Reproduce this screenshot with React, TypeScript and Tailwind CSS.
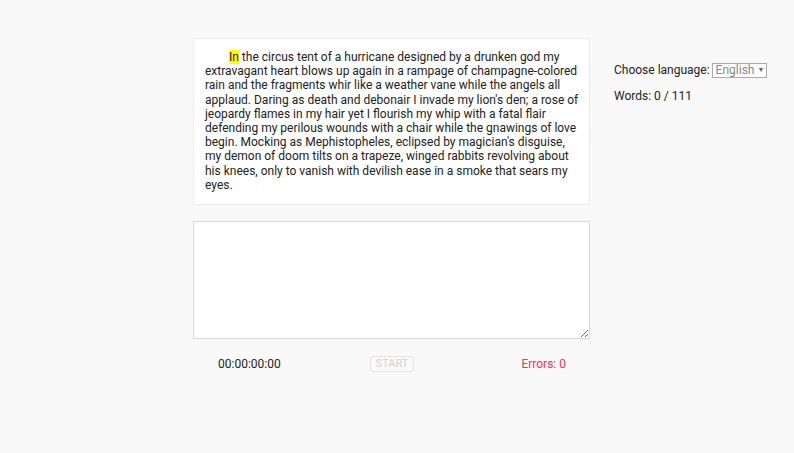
import { useState } from "react"

const passage =
  "In the circus tent of a hurricane designed by a drunken god my extravagant heart blows up again in a rampage of champagne-colored rain and the fragments whir like a weather vane while the angels all applaud. Daring as death and debonair I invade my lion's den; a rose of jeopardy flames in my hair yet I flourish my whip with a fatal flair defending my perilous wounds with a chair while the gnawings of love begin. Mocking as Mephistopheles, eclipsed by magician's disguise, my demon of doom tilts on a trapeze, winged rabbits revolving about his knees, only to vanish with devilish ease in a smoke that sears my eyes."

export default function App() {
  const [typed, setTyped] = useState("")
  const words = passage.split(" ")
  const rest = passage.slice(words[0].length)

  return (
    <div className="min-h-[453px] w-full bg-[#f9f9f9] font-['Roboto',sans-serif] text-[12px] text-[#222]">
      <div className="flex pl-[193px] pt-[38px]">
        <div className="w-[397px]">
          <div className="border border-[#ececec] bg-white pl-[11px] pr-[8px] pt-[11px] pb-[12px] leading-[14.2px] indent-[24px]">
            <span className="bg-[#ffff00]">{words[0]}</span>
            {rest}
          </div>

          <textarea
            value={typed}
            onChange={(e) => setTyped(e.target.value)}
            className="mt-[16px] block h-[118px] w-full border border-[#d9d9d9] bg-white outline-none"
          />

          <div className="mt-[16px] flex items-center justify-between pl-[25px] pr-[24px]">
            <span className="w-[80px]">00:00:00:00</span>
            <button
              disabled
              className="h-[16px] rounded-[3px] border border-[#e3e3e3] px-[5px] text-[11px] leading-[14px] text-[#d4d4d4]"
            >
              START
            </button>
            <span className="w-[80px] text-right text-[#ff2d4f]">Errors: 0</span>
          </div>
        </div>

        <div className="ml-[24px] pt-[23px]">
          <div className="flex items-center">
            <span>Choose language:</span>
            <div className="ml-[2px] flex h-[15px] items-center border border-[#aaa] bg-white pl-[3px] pr-[2px] text-[#888]">
              <span>English</span>
              <span className="ml-[3px] text-[7px] text-[#666]">▼</span>
            </div>
          </div>
          <div className="mt-[8px]">Words: 0 / {words.length}</div>
        </div>
      </div>
    </div>
  )
}
